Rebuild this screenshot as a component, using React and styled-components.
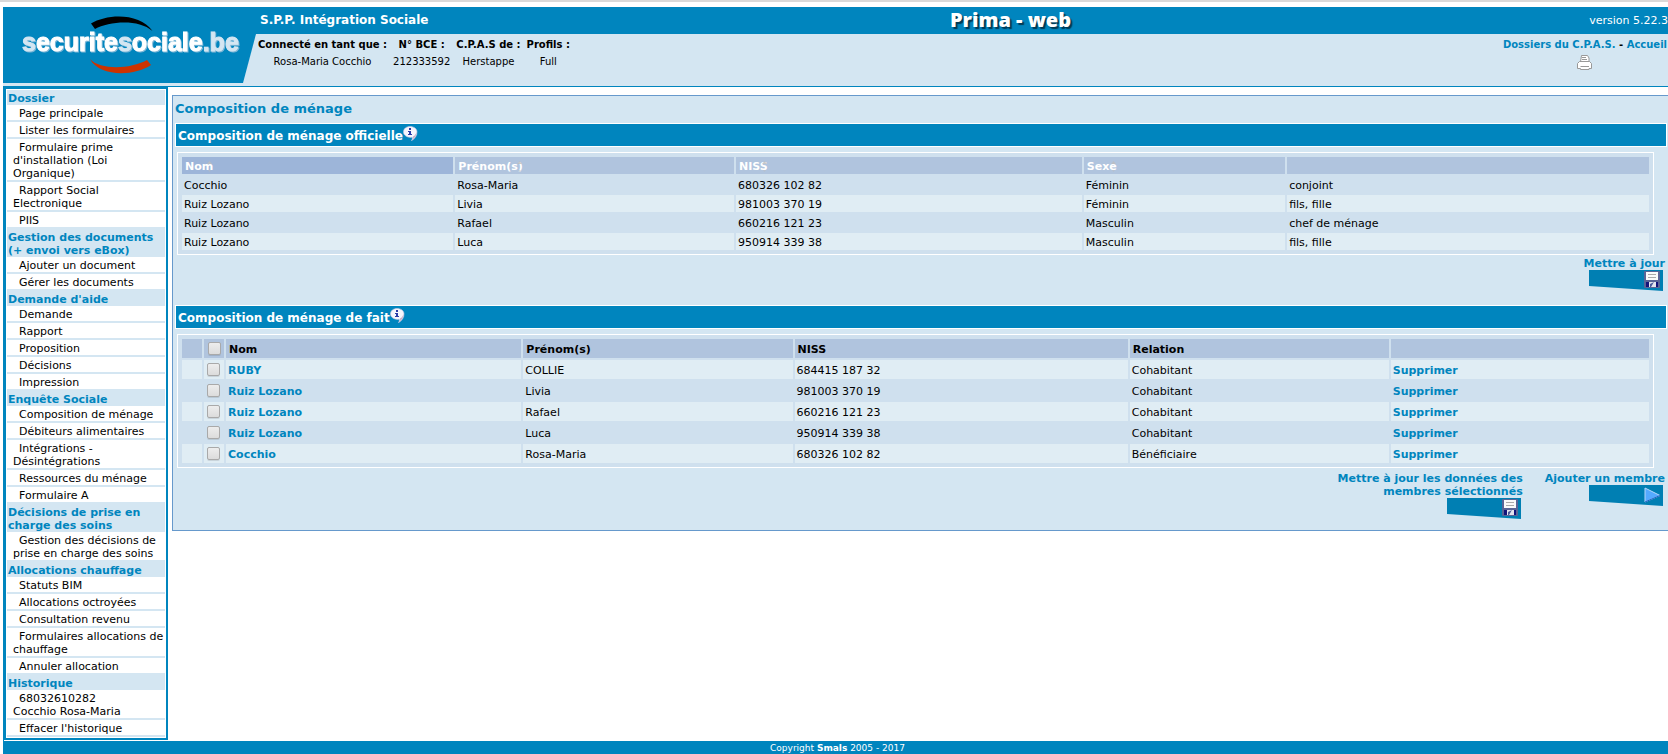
import styled, { createGlobalStyle } from "styled-components";

const GlobalStyle = createGlobalStyle`
  * {
    box-sizing: border-box;
  }

  body {
    margin: 0;
    background-color: #fff;
    color: #000;
    font-family: "DejaVu Sans", sans-serif;
    font-size: 11px;
    line-height: 13px;
  }

  a {
    color: inherit;
    text-decoration: none;
  }

  button {
    border: none;
    padding: 0;
    background: none;
    font: inherit;
    color: inherit;
    cursor: pointer;
  }
`;

const Page = styled.div`
  border-top: solid 2px #d9d9d9;
  padding: 5px 0 0 3px;
`;

const Frame = styled.div`
  border-left: solid 1px #0085be;
`;

const Header = styled.header`
  display: flex;
  margin-left: -1px;
  background-color: #d4e6f2;
  border-bottom: solid 1px #0085be;
  padding-bottom: 3px;
`;

const LogoBox = styled.a`
  flex: none;
  width: 253px;
  height: 76px;
  background-color: #0085be;
  clip-path: polygon(0 0, 100% 0, 100% 27px, 240px 100%, 0 100%);

  svg {
    display: block;
  }
`;

const LogoText = styled.text`
  font-family: "Liberation Sans", sans-serif;
  font-size: 25px;
  font-weight: 700;
  fill: #fff;
  stroke: #fff;
  stroke-width: 1px;
  filter: drop-shadow(1px 1px 0 #7db6d6);

  tspan {
    fill: #d4e6f2;
    stroke: #d4e6f2;
  }
`;

const HeaderMain = styled.div`
  flex: 1;
`;

const TopBar = styled.div`
  display: grid;
  grid-template-columns: 49% auto 1fr;
  align-items: center;
  height: 27px;
  padding-left: 5px;
  padding-bottom: 1px;
  margin-left: -1px;
  background-color: #0085be;
  color: #fff;
`;

const Service = styled.span`
  font-size: 12px;
  font-weight: 700;
`;

const AppName = styled.h1`
  margin: 0;
  font-family: "Open Sans", sans-serif;
  font-size: 20px;
  font-weight: 800;
  line-height: 24px;
  text-shadow: 2px 2px 1px #003a55;
`;

const Version = styled.span`
  text-align: right;
`;

const InfoBar = styled.div`
  display: flex;
  justify-content: space-between;
  font-size: 10px;
`;

const InfoTable = styled.table`
  border-collapse: collapse;
  margin: 2px 0 0 -1px;

  th,
  td {
    padding: 2px 3px;
    text-align: center;
    white-space: nowrap;
  }
`;

const QuickLinks = styled.nav`
  padding: 4px 1px 0 0;
  text-align: center;
  font-weight: 700;

  a {
    color: #0085be;
  }

  svg {
    display: block;
    margin: 4px auto 0;
  }
`;

const Content = styled.div`
  display: flex;
  align-items: flex-start;
`;

const Sidebar = styled.nav`
  flex: none;
  width: 164px;
  border: solid 2px #0085be;
  padding: 1px;
`;

const MenuTitle = styled.h2`
  margin: 0;
  padding: 2px 0 0 1px;
  background-color: #d4e6f2;
  color: #0085be;
  font-size: 11px;
  line-height: 13px;
  white-space: pre;
`;

const MenuList = styled.ul`
  margin: 0;
  padding: 0;
  list-style: none;
`;

const MenuItem = styled.li`
  padding: 2px 0 0 6px;
  border-bottom: solid 2px #d4e6f2;
  text-indent: 6px;
  white-space: pre;

  a {
    display: block;
  }
`;

const FollowLine = styled.span`
  display: block;
  text-indent: 0;
`;

const Panel = styled.main`
  flex: 1;
  margin: 8px 0 0 4px;
  border: solid 1px #6699cc;
  border-right: none;
  background-color: #d4e6f2;
  padding: 0 1px 11px 2px;
`;

const PanelTitle = styled.h2`
  margin: 0;
  padding: 5px 0 6px;
  color: #0085be;
  font-size: 13px;
  line-height: 16px;
`;

const SectionBar = styled.h3`
  display: flex;
  align-items: flex-start;
  margin: 0 0 5px;
  height: 24px;
  border: solid 1px #fff;
  background-color: #0085be;
  color: #fff;
  padding-left: 2px;
  font-size: 12px;
  line-height: 25px;

  svg {
    margin-top: 2px;
  }
`;

const TableBox = styled.div`
  margin: 0 13px 0 2px;
  border: solid 1px #fff;
  background-color: #cfe0ee;
  padding: 2px;
`;

const DataTable = styled.table`
  width: 100%;
  table-layout: fixed;
  border-collapse: separate;
  border-spacing: 2px;

  th {
    height: ${({ $rowHeight }) => $rowHeight}px;
    padding: 1px 3px 0;
    background-color: #b0c4de;
    color: ${({ $headColor }) => $headColor};
    text-align: left;
  }

  td {
    height: ${({ $rowHeight }) => $rowHeight}px;
    padding: 1px 2px 0;
  }

  td a {
    color: #0085be;
    font-weight: 700;
  }
`;

const Col = styled.col`
  width: ${({ $width }) => $width};
`;

const Row = styled.tr`
  td {
    background-color: ${({ $light }) => ($light ? "#e0edf4" : "#cfe0ee")};
  }
`;

const SortHead = styled.th`
  && {
    background-color: ${({ $sorted }) => ($sorted ? "#9db5d9" : "#b0c4de")};
  }
`;

const SortButton = styled.button`
  position: relative;
  display: block;
  font-weight: 700;

  svg {
    position: absolute;
    top: 1px;
    right: 0;
  }
`;

const Checkbox = styled.input`
  appearance: none;
  display: block;
  width: 13px;
  height: 13px;
  margin: 0 0 1px 1px;
  border: solid 1px #a9a9a9;
  border-radius: 2px;
  background: linear-gradient(#ededed, #dcdcdc);
  box-shadow: 0 1px 0 rgba(0, 0, 0, 0.1);

  &:checked {
    background: #0085be;
  }
`;

const Actions = styled.div`
  display: flex;
  justify-content: flex-end;
  gap: 22px;
  align-items: flex-start;
  margin: ${({ $margin }) => $margin};
  padding-right: 2px;
`;

const ActionButton = styled.button`
  color: #0085be;
  font-weight: 700;
  text-align: right;
  white-space: pre;

  svg {
    display: block;
    margin: 0 2px 0 auto;
  }
`;

const Footer = styled.footer`
  margin: 1px 0 0 -1px;
  padding: 1px 0 0 4px;
  background-color: #0085be;
  color: #fff;
  font-size: 9px;
  line-height: 12px;
  text-align: center;
`;

const menu = [
  {
    title: "Dossier",
    items: [
      "Page principale",
      "Lister les formulaires",
      "Formulaire prime\nd'installation (Loi\nOrganique)",
      "Rapport Social\nElectronique",
      "PIIS",
    ],
  },
  {
    title: "Gestion des documents\n(+ envoi vers eBox)",
    items: ["Ajouter un document", "Gérer les documents"],
  },
  {
    title: "Demande d'aide",
    items: ["Demande", "Rapport", "Proposition", "Décisions", "Impression"],
  },
  {
    title: "Enquête Sociale",
    items: [
      "Composition de ménage",
      "Débiteurs alimentaires",
      "Intégrations -\nDésintégrations",
      "Ressources du ménage",
      "Formulaire A",
    ],
  },
  {
    title: "Décisions de prise en\ncharge des soins",
    items: ["Gestion des décisions de\nprise en charge des soins"],
  },
  {
    title: "Allocations chauffage",
    items: [
      "Statuts BIM",
      "Allocations octroyées",
      "Consultation revenu",
      "Formulaires allocations de\nchauffage",
      "Annuler allocation",
    ],
  },
  {
    title: "Historique",
    items: ["68032610282\nCocchio Rosa-Maria", "Effacer l'historique"],
  },
];

const official = [
  ["Cocchio", "Rosa-Maria", "680326 102 82", "Féminin", "conjoint"],
  ["Ruiz Lozano", "Livia", "981003 370 19", "Féminin", "fils, fille"],
  ["Ruiz Lozano", "Rafael", "660216 121 23", "Masculin", "chef de ménage"],
  ["Ruiz Lozano", "Luca", "950914 339 38", "Masculin", "fils, fille"],
];

const members = [
  ["RUBY", "COLLIE", "684415 187 32", "Cohabitant"],
  ["Ruiz Lozano", "Livia", "981003 370 19", "Cohabitant"],
  ["Ruiz Lozano", "Rafael", "660216 121 23", "Cohabitant"],
  ["Ruiz Lozano", "Luca", "950914 339 38", "Cohabitant"],
  ["Cocchio", "Rosa-Maria", "680326 102 82", "Bénéficiaire"],
];

function Logo() {
  return (
    <LogoBox href="#" aria-label="securitesociale.be">
      <svg width="253" height="76" viewBox="0 0 253 76">
        <path
          d="M88 16.5 C104 6.5 137 5.5 149.5 24 C135 11.5 106 14.5 92 22 Z"
          fill="#000"
        />
        <LogoText x="19" y="44">
          <tspan>s</tspan>ecurite<tspan>s</tspan>ociale<tspan>.be</tspan>
        </LogoText>
        <path
          d="M87 52 C97 63 127 62.5 144 53 L148 58 C130 70 96 69.5 87 52 Z"
          fill="#cc3300"
        />
      </svg>
    </LogoBox>
  );
}

function PrinterIcon() {
  return (
    <svg width="15" height="15" viewBox="0 0 15 15">
      <path
        d="M3.5 7 L4.5 0.5 H10.5 L12 3 V7"
        fill="#fff"
        stroke="#999"
      />
      <path
        d="M2.5 6.5 L0.5 8.5 V13.5 H3.5 V14.5 H12 V13.5 H14.5 V8.5 L12.5 6.5 Z"
        fill="#fff"
        stroke="#999"
      />
      <path d="M5 2.5 H9 M5 4.5 H10 M3.5 11.5 H12" stroke="#999" />
    </svg>
  );
}

function InfoIcon() {
  return (
    <svg width="15" height="15" viewBox="0 0 15 15">
      <path
        d="M7 0.5 C11 0.5 14 2.8 14 6 C14 9.5 12.2 12.5 8.4 14.8 C9.3 13.4 9.5 12.6 9.3 11.3 C4.5 11.9 0.5 9.5 0.5 6 C0.5 2.8 3.2 0.5 7 0.5 Z"
        fill="#f6f5fc"
        stroke="#c4c4e2"
        strokeWidth="0.6"
      />
      <path
        d="M13.6 5 C13.7 9 12 12 9 14 C10 12.6 10.3 11.6 10 10.6 C12 9.6 13.2 8 13.6 5 Z"
        fill="#c9a9c4"
      />
      <path
        d="M6 2 H8 V4 H6 Z M5 5 H8 V8 H9 V9 H5 V8 H6 V6 H5 Z"
        fill="#2b3ba8"
      />
    </svg>
  );
}

function SortIcon() {
  return (
    <svg width="7" height="11" viewBox="0 0 7 11">
      <path d="M3.5 0 L6 3 H1 Z" fill="#bdbdbd" fillOpacity="0.8" />
      <path d="M3.5 11 L5 9 H2 Z" fill="#bdbdbd" fillOpacity="0.5" />
    </svg>
  );
}

// slanted banner drawn under every action label
function Banner({ children }) {
  return (
    <svg width="74" height="21" viewBox="0 0 74 21">
      <path d="M0 0 H74 V21 L0 16 Z" fill="#007fb3" />
      {children}
    </svg>
  );
}

function FloppyBanner() {
  return (
    <Banner>
      <rect x="55" y="1" width="16" height="17" rx="1" fill="#5a6596" />
      <rect x="57" y="2" width="12" height="8" fill="#fafafa" />
      <path d="M59 4.5 H67 M59 7.5 H67" stroke="#aaa" />
      <rect x="57" y="12" width="12" height="5" fill="#14147a" />
      <rect x="60" y="12" width="7" height="5" fill="#e4e4ee" />
      <path d="M61 17 V14 L65 12 L62 17 Z" fill="#4a5a9a" />
    </Banner>
  );
}

function ArrowBanner() {
  return (
    <Banner>
      <path d="M56 3 L71 10.5 L56 17 Z" fill="#55aaff" stroke="#b5d8fb" />
      <path d="M56 17 L71 10.5" stroke="#1c5fc0" />
    </Banner>
  );
}

// only the first line of an entry is indented
function MenuLink({ text }) {
  const [first, ...rest] = text.split("\n");

  return (
    <a href="#">
      {first}
      {rest.map((line) => (
        <FollowLine key={line}>{line}</FollowLine>
      ))}
    </a>
  );
}

function App() {
  return (
    <Page>
      <GlobalStyle />
      <Frame>
        <Header>
          <Logo />
          <HeaderMain>
            <TopBar>
              <Service>S.P.P. Intégration Sociale</Service>
              <AppName>Prima - web</AppName>
              <Version>version 5.22.3</Version>
            </TopBar>
            <InfoBar>
              <InfoTable>
                <thead>
                  <tr>
                    <th>Connecté en tant que :</th>
                    <th>N° BCE :</th>
                    <th>C.P.A.S de :</th>
                    <th>Profils :</th>
                  </tr>
                </thead>
                <tbody>
                  <tr>
                    <td>Rosa-Maria Cocchio</td>
                    <td>212333592</td>
                    <td>Herstappe</td>
                    <td>Full</td>
                  </tr>
                </tbody>
              </InfoTable>
              <QuickLinks>
                <a href="#">Dossiers du C.P.A.S.</a> - <a href="#">Accueil</a>
                <a href="#" aria-label="Imprimer">
                  <PrinterIcon />
                </a>
              </QuickLinks>
            </InfoBar>
          </HeaderMain>
        </Header>

        <Content>
          <Sidebar>
            {menu.map(({ title, items }) => (
              <div key={title}>
                <MenuTitle>{title}</MenuTitle>
                <MenuList>
                  {items.map((item) => (
                    <MenuItem key={item}>
                      <MenuLink text={item} />
                    </MenuItem>
                  ))}
                </MenuList>
              </div>
            ))}
          </Sidebar>

          <Panel>
            <PanelTitle>Composition de ménage</PanelTitle>

            <SectionBar>
              Composition de ménage officielle
              <InfoIcon />
            </SectionBar>
            <TableBox>
              <DataTable $rowHeight={17} $headColor="#fff">
                <colgroup>
                  <Col $width="18.6%" />
                  <Col $width="19.1%" />
                  <Col $width="23.7%" />
                  <Col $width="13.8%" />
                  <Col />
                </colgroup>
                <thead>
                  <tr>
                    {["Nom", "Prénom(s)", "NISS", "Sexe"].map((label) => (
                      <SortHead key={label} $sorted={label === "Nom"}>
                        <SortButton>
                          {label}
                          <SortIcon />
                        </SortButton>
                      </SortHead>
                    ))}
                    <th></th>
                  </tr>
                </thead>
                <tbody>
                  {official.map((row, i) => (
                    <Row key={row[2]} $light={i % 2 === 1}>
                      {row.map((value) => (
                        <td key={value}>{value}</td>
                      ))}
                    </Row>
                  ))}
                </tbody>
              </DataTable>
            </TableBox>
            <Actions $margin="2px 0 14px">
              <ActionButton>
                Mettre à jour
                <FloppyBanner />
              </ActionButton>
            </Actions>

            <SectionBar>
              Composition de ménage de fait
              <InfoIcon />
            </SectionBar>
            <TableBox>
              <DataTable $rowHeight={19} $headColor="#000">
                <colgroup>
                  <Col $width="20px" />
                  <Col $width="20px" />
                  <Col $width="20.3%" />
                  <Col $width="18.5%" />
                  <Col $width="22.9%" />
                  <Col $width="17.8%" />
                  <Col />
                </colgroup>
                <thead>
                  <tr>
                    <th></th>
                    <th>
                      <Checkbox type="checkbox" aria-label="Tous" />
                    </th>
                    <th>Nom</th>
                    <th>Prénom(s)</th>
                    <th>NISS</th>
                    <th>Relation</th>
                    <th></th>
                  </tr>
                </thead>
                <tbody>
                  {members.map(([name, firstName, niss, relation], i) => (
                    <Row key={niss} $light={i % 2 === 0}>
                      <td></td>
                      <td>
                        <Checkbox type="checkbox" aria-label={firstName} />
                      </td>
                      <td>
                        <a href="#">{name}</a>
                      </td>
                      <td>{firstName}</td>
                      <td>{niss}</td>
                      <td>{relation}</td>
                      <td>
                        <a href="#">Supprimer</a>
                      </td>
                    </Row>
                  ))}
                </tbody>
              </DataTable>
            </TableBox>
            <Actions $margin="4px 0 0">
              <ActionButton>
                {"Mettre à jour les données des\nmembres sélectionnés"}
                <FloppyBanner />
              </ActionButton>
              <ActionButton>
                Ajouter un membre
                <ArrowBanner />
              </ActionButton>
            </Actions>
          </Panel>
        </Content>

        <Footer>
          Copyright <b>Smals</b> 2005 - 2017
        </Footer>
      </Frame>
    </Page>
  );
}

export default App;
